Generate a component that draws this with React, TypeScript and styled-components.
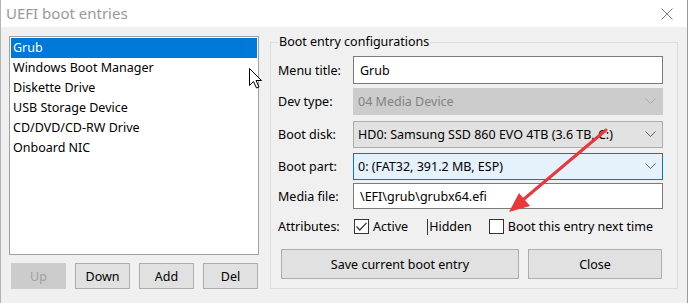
import styled, { createGlobalStyle } from "styled-components";

const GlobalStyle = createGlobalStyle`
  html, body {
    margin: 0;
    padding: 0;
    background: #ffffff;
  }
  body {
    font-family: "Noto Sans", "Open Sans", sans-serif;
    font-size: 12.5px;
    color: #000000;
  }
`;

const Window = styled.div`
  position: relative;
  width: 688px;
  height: 303px;
  box-sizing: border-box;
  border-left: 1px solid #b4b4b4;
  border-right: 1px solid #9a9a9a;
  overflow: hidden;
  display: flex;
  flex-direction: column;
`;

const TitleBar = styled.div`
  height: 27px;
  flex-shrink: 0;
  background: #ffffff;
  display: flex;
  align-items: center;
  justify-content: space-between;
  padding: 0 14px 0 5px;

  .title {
    font-size: 15px;
    color: #999999;
    margin-top: -2px;
  }
`;

const Body = styled.div`
  flex: 1;
  background: #f0f0f0;
  display: flex;
  align-items: flex-start;
  gap: 11px;
  padding: 9px 0 0 8px;
`;

const LeftColumn = styled.div`
  display: flex;
  flex-direction: column;
  gap: 8px;
  width: 250px;
`;

const ListBox = styled.div`
  height: 219px;
  box-sizing: border-box;
  border: 1px solid #a0a0a0;
  background: #ffffff;
  padding: 1px;
`;

const ListItem = styled.div<{ $selected?: boolean }>`
  height: 20px;
  line-height: 20px;
  padding-left: 2px;
  white-space: nowrap;
  background: ${(p) => (p.$selected ? "#0078d7" : "transparent")};
  color: ${(p) => (p.$selected ? "#ffffff" : "#000000")};
`;

const ButtonRow = styled.div`
  display: flex;
  gap: 9px;
  padding-left: 2px;
`;

const Button = styled.div<{ $width: number; $height?: number; $disabled?: boolean }>`
  width: ${(p) => p.$width}px;
  height: ${(p) => p.$height ?? 26}px;
  box-sizing: border-box;
  display: flex;
  align-items: center;
  justify-content: center;
  background: ${(p) => (p.$disabled ? "#cccccc" : "#e1e1e1")};
  border: 1px solid ${(p) => (p.$disabled ? "#cccccc" : "#adadad")};
  color: ${(p) => (p.$disabled ? "#a0a0a0" : "#000000")};
`;

const Group = styled.fieldset`
  margin: -3px 0 0 0;
  width: 408px;
  box-sizing: border-box;
  border: 1px solid #dcdcdc;
  padding: 5px 13px 9px 7px;
  display: flex;
  flex-direction: column;

  legend {
    padding: 0 1px;
    line-height: 18px;
  }
`;

const Row = styled.div<{ $top: number; $height: number }>`
  display: grid;
  grid-template-columns: 75px 310px;
  align-items: center;
  white-space: nowrap;
  margin-top: ${(p) => p.$top}px;
  height: ${(p) => p.$height}px;
`;

const TextBox = styled.div`
  height: 100%;
  box-sizing: border-box;
  border: 1px solid #7a7a7a;
  background: #ffffff;
  display: flex;
  align-items: center;
  padding-left: 6px;
`;

const Combo = styled.div<{ $state?: "disabled" | "hover" }>`
  height: 100%;
  box-sizing: border-box;
  display: flex;
  align-items: center;
  justify-content: space-between;
  padding: 0 6px 0 4px;
  border: 1px solid
    ${(p) =>
      p.$state === "disabled" ? "#cccccc" : p.$state === "hover" ? "#0078d7" : "#adadad"};
  background: ${(p) =>
    p.$state === "disabled" ? "#cccccc" : p.$state === "hover" ? "#e5f1fb" : "#e1e1e1"};
  color: ${(p) => (p.$state === "disabled" ? "#838383" : "#000000")};
`;

const Attributes = styled.div`
  display: flex;
  align-items: center;
  gap: 4px;
  padding-left: 1px;
  white-space: nowrap;
`;

const CheckBox = styled.span`
  width: 15px;
  height: 15px;
  flex-shrink: 0;
  box-sizing: border-box;
  border: 1px solid #333333;
  background: #ffffff;
  display: inline-flex;
  align-items: center;
  justify-content: center;
`;

const Hidden = styled.span`
  margin-left: 15px;
  margin-right: 13px;
  padding-left: 1px;
  border-left: 1px solid #333333;
  line-height: 16px;
`;

const ActionRow = styled.div`
  display: flex;
  gap: 9px;
  margin-top: 15px;
  padding-left: 3px;
`;

const Overlay = styled.svg`
  position: absolute;
  left: 0;
  top: 0;
  pointer-events: none;
`;

const Chevron = ({ color }: { color: string }) => (
  <svg width="11" height="7" viewBox="0 0 11 7">
    <polyline points="0.5,0.5 5.5,5.5 10.5,0.5" fill="none" stroke={color} strokeWidth="1" />
  </svg>
);

const entries = [
  "Grub",
  "Windows Boot Manager",
  "Diskette Drive",
  "USB Storage Device",
  "CD/DVD/CD-RW Drive",
  "Onboard NIC",
];

export default function App() {
  return (
    <>
      <GlobalStyle />
      <Window>
        <TitleBar>
          <span className="title">UEFI boot entries</span>
          <svg width="12" height="12" viewBox="0 0 12 12">
            <path d="M0.5 0.5 L11.5 11.5 M11.5 0.5 L0.5 11.5" stroke="#808080" strokeWidth="1" />
          </svg>
        </TitleBar>
        <Body>
          <LeftColumn>
            <ListBox>
              {entries.map((entry, i) => (
                <ListItem key={entry} $selected={i === 0}>
                  {entry}
                </ListItem>
              ))}
            </ListBox>
            <ButtonRow>
              <Button $width={55} $disabled>Up</Button>
              <Button $width={55}>Down</Button>
              <Button $width={55}>Add</Button>
              <Button $width={55}>Del</Button>
            </ButtonRow>
          </LeftColumn>

          <Group>
            <legend>Boot entry configurations</legend>
            <Row $top={0} $height={28}>
              <span>Menu title:</span>
              <TextBox>Grub</TextBox>
            </Row>
            <Row $top={4} $height={27}>
              <span>Dev type:</span>
              <Combo $state="disabled">
                04 Media Device
                <Chevron color="#a8a8a8" />
              </Combo>
            </Row>
            <Row $top={6} $height={27}>
              <span>Boot disk:</span>
              <Combo>
                HD0: Samsung SSD 860 EVO 4TB (3.6 TB, C:)
                <Chevron color="#606060" />
              </Combo>
            </Row>
            <Row $top={5} $height={27}>
              <span>Boot part:</span>
              <Combo $state="hover">
                0: (FAT32, 391.2 MB, ESP)
                <Chevron color="#606060" />
              </Combo>
            </Row>
            <Row $top={3} $height={26}>
              <span>Media file:</span>
              <TextBox>\EFI\grub\grubx64.efi</TextBox>
            </Row>
            <Row $top={9} $height={16}>
              <span>Attributes:</span>
              <Attributes>
                <CheckBox>
                  <svg width="11" height="9" viewBox="0 0 11 9">
                    <polyline points="0.5,4.5 3.8,8 10.5,0.8" fill="none" stroke="#333333" strokeWidth="1.2" />
                  </svg>
                </CheckBox>
                <span>Active</span>
                <Hidden>Hidden</Hidden>
                <CheckBox />
                <span>Boot this entry next time</span>
              </Attributes>
            </Row>
            <ActionRow>
              <Button $width={238} $height={30}>Save current boot entry</Button>
              <Button $width={134} $height={30}>Close</Button>
            </ActionRow>
          </Group>
        </Body>

        <Overlay width="691" height="303" viewBox="0 0 691 303">
          {/* mouse pointer */}
          <path
            d="M248.5 68.5 L248.5 85.5 L252.5 81.5 L255.5 88 L258 87 L255 80.5 L260.5 80.5 Z"
            fill="#ffffff"
            stroke="#000000"
            strokeWidth="1"
          />
          {/* red annotation arrow */}
          <line x1="605" y1="130" x2="523" y2="199" stroke="#e8383d" strokeWidth="3" strokeLinecap="round" />
          <polygon points="508,212 518,193 529,206" fill="#e8383d" />
        </Overlay>
      </Window>
    </>
  );
}
